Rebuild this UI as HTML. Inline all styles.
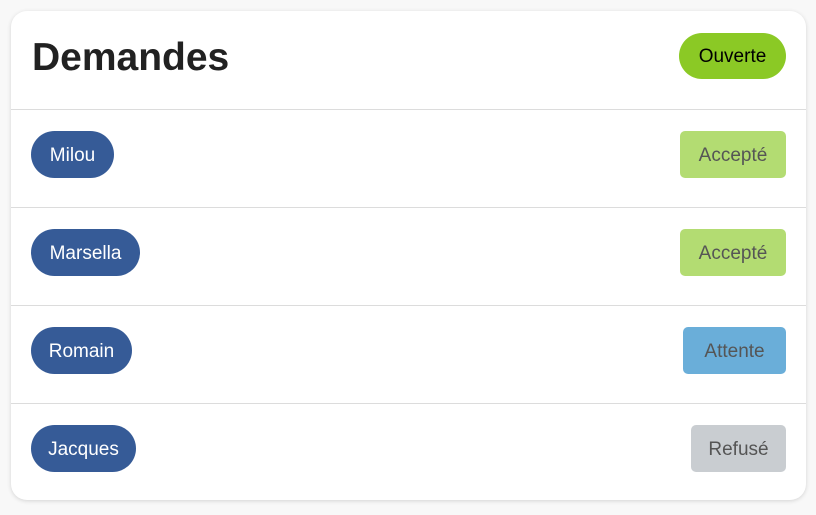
<!DOCTYPE html>
<html><head><meta charset="utf-8"><style>
body{margin:0;background:#f8f8f8;width:816px;height:515px;font-family:"Liberation Sans",sans-serif;}
.card{position:absolute;left:11px;top:11px;width:795px;height:489px;background:#fff;border-radius:16px;box-shadow:0 1px 4px rgba(0,0,0,.15);overflow:hidden}
.hd{height:98px;border-bottom:1px solid #dcdcdc;position:relative}
.hd h1{position:absolute;left:21px;top:27px;margin:0;font-size:39px;line-height:40px;font-weight:bold;color:#212121}
.open{position:absolute;right:20px;top:22px;width:107px;height:46px;border-radius:23px;background:#8bc925;color:#000;font-size:19px;display:flex;align-items:center;justify-content:center;padding-top:2px;box-sizing:border-box}
.row{height:97px;border-bottom:1px solid #dcdcdc;position:relative}
.row:last-child{border-bottom:none}
.name{position:absolute;left:20px;top:21px;height:47px;border-radius:24px;background:#365b97;color:#fff;font-size:19px;display:flex;align-items:center;justify-content:center;padding-top:2px;box-sizing:border-box}
.st{position:absolute;right:20px;top:21px;height:47px;border-radius:5px;color:#555;font-size:19px;display:flex;align-items:center;justify-content:center;padding-top:2px;box-sizing:border-box}
</style></head><body>
<div class="card">
<div class="hd"><h1>Demandes</h1><div class="open">Ouverte</div></div>
<div class="row"><div class="name" style="width:83px">Milou</div><div class="st" style="width:106px;background:#b3dc72">Accepté</div></div>
<div class="row"><div class="name" style="width:109px">Marsella</div><div class="st" style="width:106px;background:#b3dc72">Accepté</div></div>
<div class="row"><div class="name" style="width:101px">Romain</div><div class="st" style="width:103px;background:#6aaed9">Attente</div></div>
<div class="row"><div class="name" style="width:105px">Jacques</div><div class="st" style="width:95px;background:#c9cdd1">Refusé</div></div>
</div>
</body></html>
